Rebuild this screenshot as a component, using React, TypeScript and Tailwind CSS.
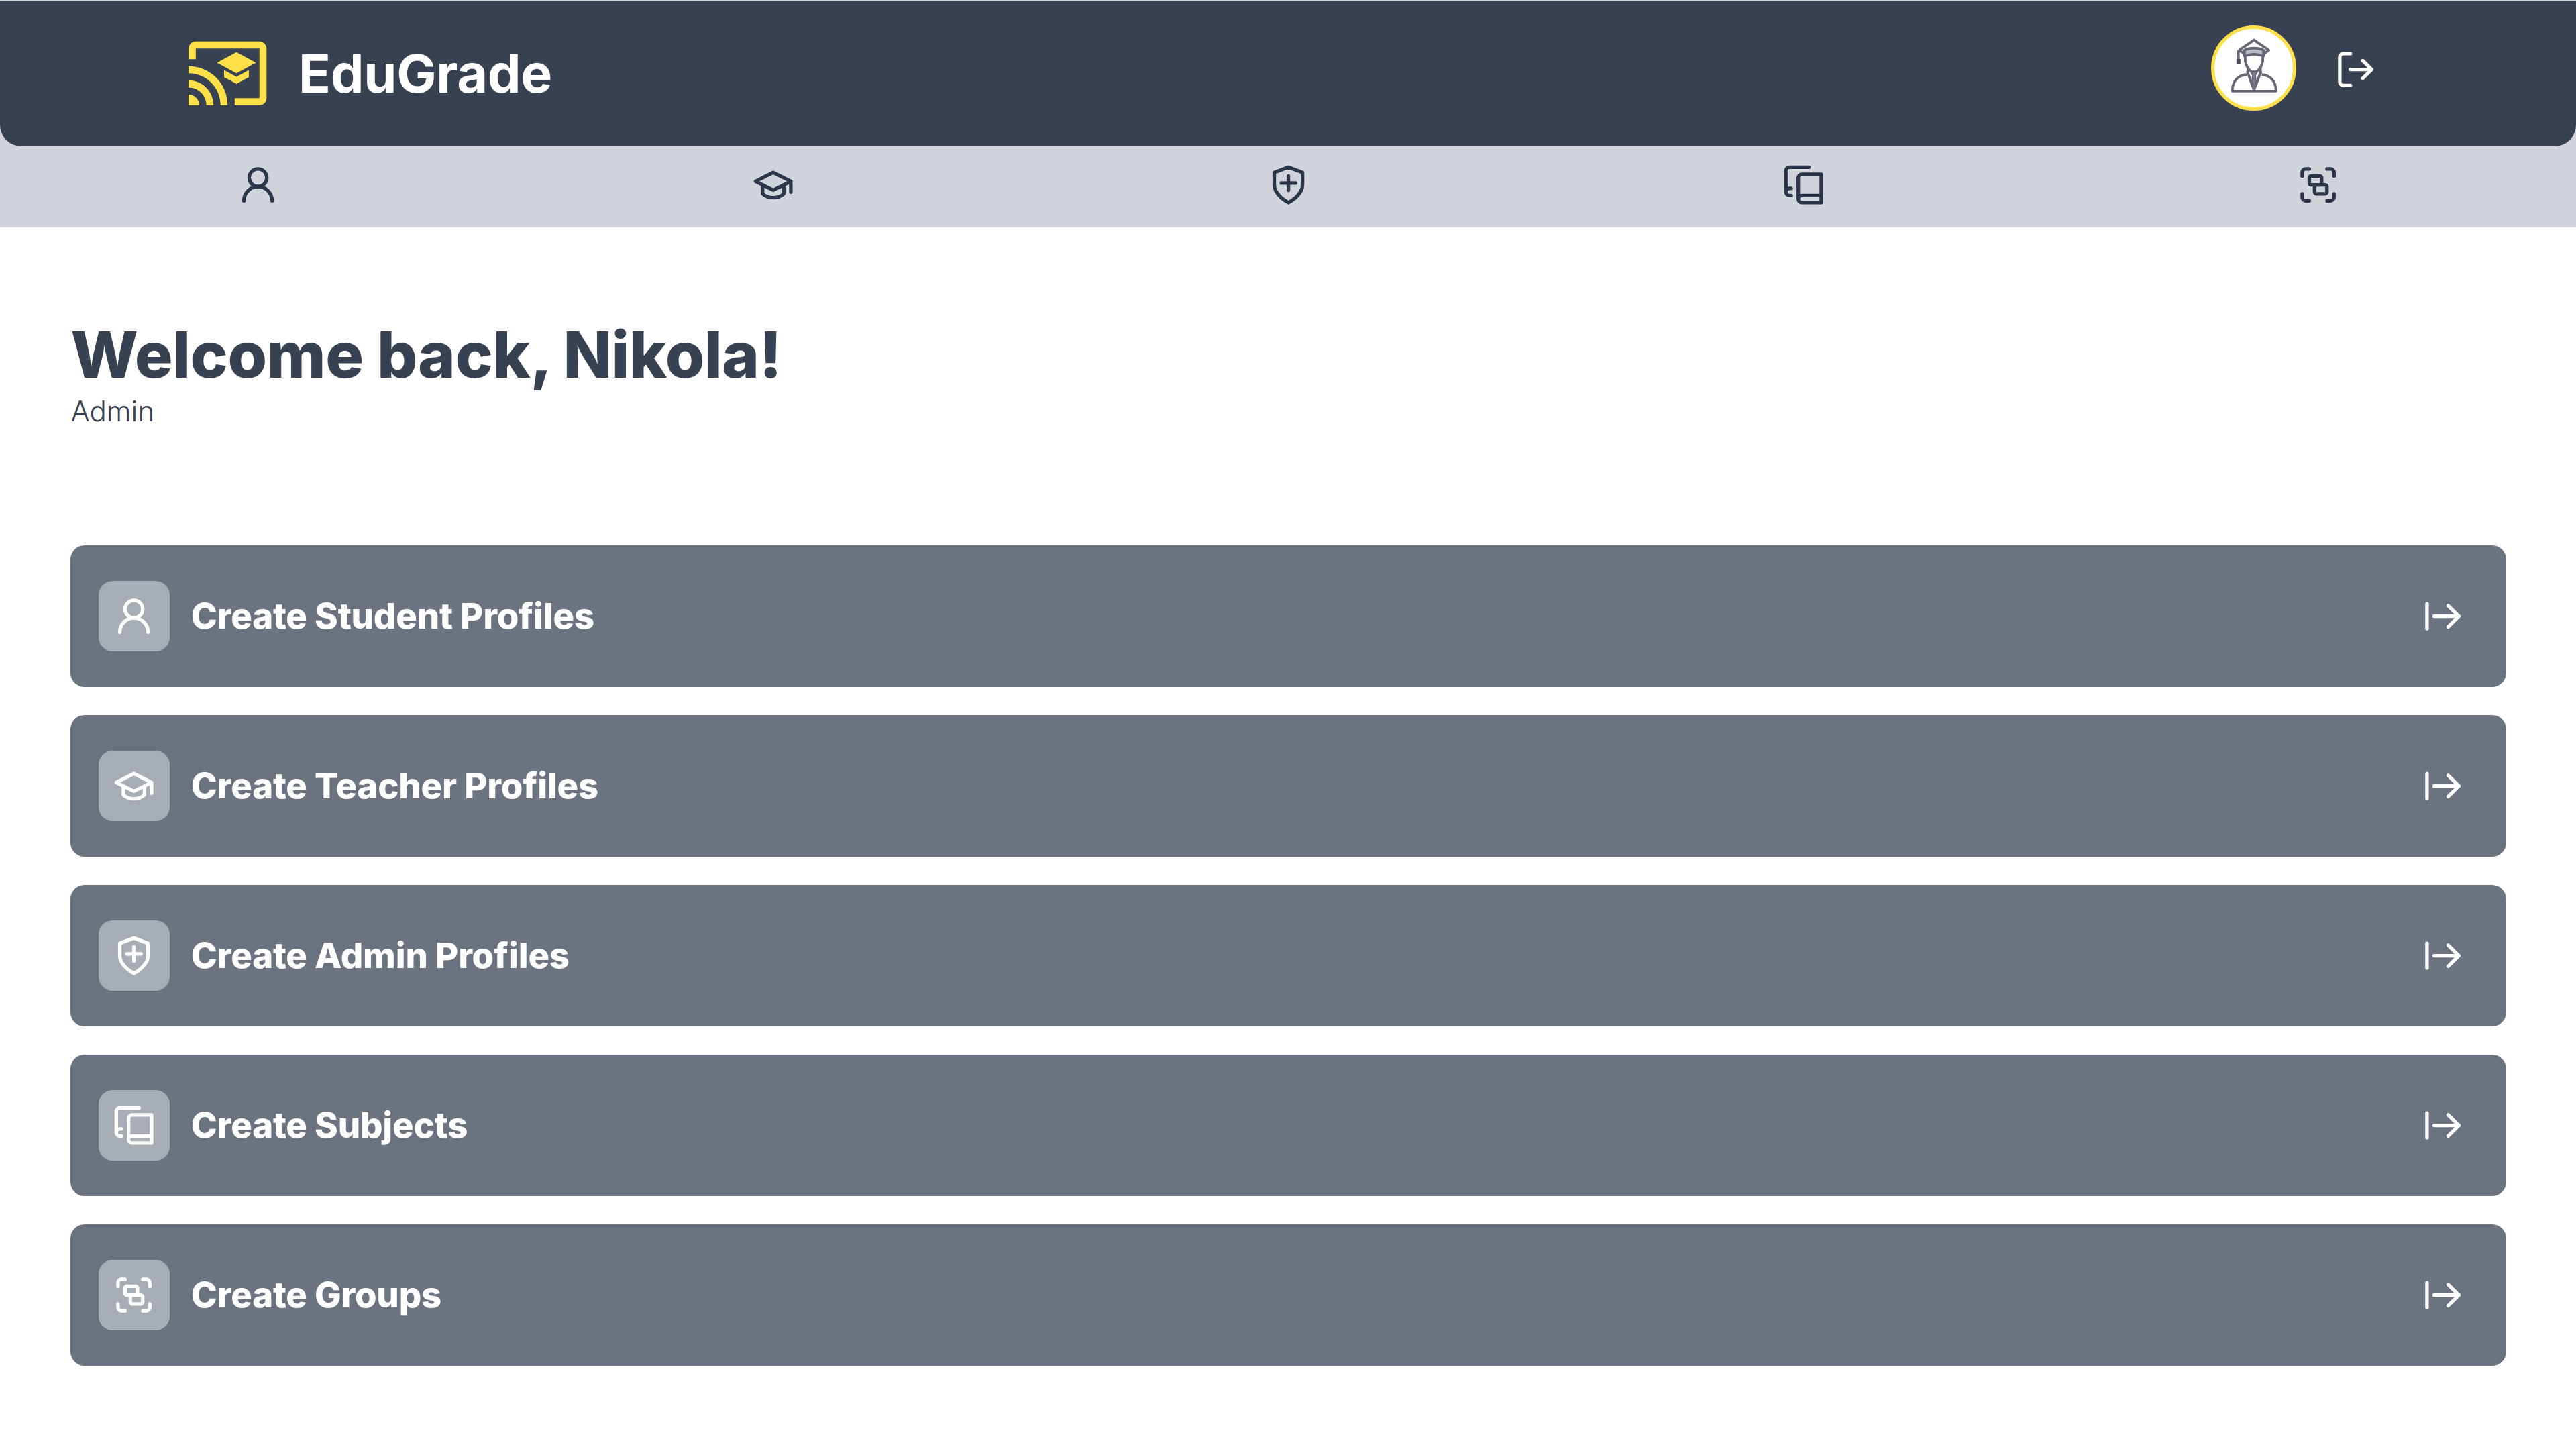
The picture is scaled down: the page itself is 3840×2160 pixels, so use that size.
import type { ReactNode } from "react";

type IconProps = { className?: string };

function Icon({ className, children }: IconProps & { children: ReactNode }) {
  return (
    <svg
      viewBox="0 0 24 24"
      fill="none"
      stroke="currentColor"
      strokeWidth={2}
      strokeLinecap="round"
      strokeLinejoin="round"
      className={`size-[63.2px] shrink-0 ${className ?? ""}`}
    >
      {children}
    </svg>
  );
}

const UserIcon = () => (
  <Icon>
    <circle cx="12" cy="8" r="5" />
    <path d="M20 21a8 8 0 0 0-16 0" />
  </Icon>
);

const CapIcon = () => (
  <Icon>
    <path d="M22 10v6M2 10l10-5 10 5-10 5z" />
    <path d="M6 12v5c3 3 9 3 12 0v-5" />
  </Icon>
);

const ShieldIcon = () => (
  <Icon>
    <path d="M12 22s8-4 8-10V5l-8-3-8 3v7c0 6 8 10 8 10" />
    <path d="M8 11h8" />
    <path d="M12 15V7" />
  </Icon>
);

const BooksIcon = () => (
  <Icon>
    <path d="M2 16V4a2 2 0 0 1 2-2h11" />
    <path d="M5 14H4a2 2 0 1 0 0 4h1" />
    <path d="M22 18H11a2 2 0 1 0 0 4h11V6H11a2 2 0 0 0-2 2v12" />
  </Icon>
);

const GroupIcon = () => (
  <Icon>
    <path d="M3 7V5c0-1.1.9-2 2-2h2" />
    <path d="M17 3h2c1.1 0 2 .9 2 2v2" />
    <path d="M21 17v2c0 1.1-.9 2-2 2h-2" />
    <path d="M7 21H5c-1.1 0-2-.9-2-2v-2" />
    <rect width="7" height="5" x="7" y="7" rx="1" />
    <rect width="7" height="5" x="10" y="12" rx="1" />
  </Icon>
);

const ArrowFromLineIcon = () => (
  <Icon className="text-white">
    <path d="M3 5v14" />
    <path d="M21 12H7" />
    <path d="m15 18 6-6-6-6" />
  </Icon>
);

const LogOutIcon = () => (
  <Icon className="mt-[5.5px] text-white">
    <path d="M9 21H5a2 2 0 0 1-2-2V5a2 2 0 0 1 2-2h4" />
    <path d="m16 17 5-5-5-5" />
    <path d="M21 12H9" />
  </Icon>
);

const Logo = () => (
  <svg viewBox="0 0 24 24" fill="currentColor" className="size-[126.6px] shrink-0 text-[#fde047]">
    <path d="M21 3H3c-1.1 0-2 .9-2 2v3h2V5h18v14h-7v2h7c1.1 0 2-.9 2-2V5c0-1.1-.9-2-2-2zM1 18v3h3c0-1.66-1.34-3-3-3zm0-4v2c2.76 0 5 2.24 5 5h2c0-3.87-3.13-7-7-7zm0-4v2c4.97 0 9 4.03 9 9h2c0-6.08-4.93-11-11-11zm10 1.09v2L14.5 15l3.5-1.91v-2L14.5 13 11 11.09zM14.5 6L9 9l5.5 3L20 9l-5.5-3z" />
  </svg>
);

/* Graduate wearing a mortarboard, shown as the profile picture */
const Avatar = () => (
  <div className="size-[127px] overflow-hidden rounded-full border-[5.5px] border-[#fde047] bg-white">
    <svg viewBox="5.5 5.5 116 116" fill="none" stroke="#666776" strokeWidth="3.8" strokeLinejoin="round" className="size-full">
      <path d="M42 37 64 22 86 37l-7 5" />
      <path d="M42 37l9 6" />
      <path d="M50 37c8-4 20-4 28 0v9c-8-4-20-4-28 0z" fill="#b9bbc5" />
      <path d="M41 37v15" />
      <path d="M38 50h6v8h-6z" fill="#4b4b5a" stroke="none" />
      <path d="M51 46v7c1 6 4 11 7 14 4 3 8 3 12 0 3-3 6-8 7-14v-7" />
      <path d="M55 63v10M73.500 63v10" />
      <path d="M53 73c-12 1-21 9-21 24.500h64.500c0-15.500-9-23.500-21-24.500" />
      <path d="M54 68l10 28 10.500-28" />
      <path d="M59 69h10l-3 5 1 12-3 8-3-8 1-12z" fill="#7b7b89" strokeWidth="2" />
    </svg>
  </div>
);

const sections = [
  { label: "Create Student Profiles", Glyph: UserIcon },
  { label: "Create Teacher Profiles", Glyph: CapIcon },
  { label: "Create Admin Profiles", Glyph: ShieldIcon },
  { label: "Create Subjects", Glyph: BooksIcon },
  { label: "Create Groups", Glyph: GroupIcon },
];

export default function App() {
  return (
    <div className="h-[2160px] w-[3840px] overflow-hidden bg-white font-['Inter',sans-serif]">
      <div className="bg-[#d1d5db] pt-[1.5px]">
        <header className="flex h-[216px] items-start justify-between rounded-b-[32px] bg-[#374151] pl-[276.4px] pr-[296.4px]">
          <div className="flex items-center gap-[42px] pt-[44.7px]">
            <Logo />
            <span className="text-[79px] leading-none font-bold tracking-[-0.003em] text-white">EduGrade</span>
          </div>
          <div className="flex items-center gap-[57.6px] pt-[36.2px]">
            <Avatar />
            <LogOutIcon />
          </div>
        </header>
        <nav className="grid h-[121.2px] grid-cols-5 pt-[26.200px] pl-[1px] text-[#2b364a]">
          {sections.map(({ label, Glyph }) => (
            <div key={label} className="flex justify-center">
              <Glyph />
            </div>
          ))}
        </nav>
      </div>

      <main className="flex flex-col pt-[137px] pr-[104px] pl-[105.4px]">
        <h1 className="text-[94.800px] leading-[105.300px] font-extrabold tracking-[-0.0045em] text-[#374151]">Welcome back, Nikola!</h1>
        <p className="text-[42.100px] leading-[63.200px] font-light text-[#374151]">Admin</p>
        <div className="mt-[169px] flex flex-col gap-[42.200px]">
          {sections.map(({ label, Glyph }) => (
            <div key={label} className="flex h-[210.800px] items-center rounded-[21px] bg-[#6b7280] pr-[63.300px] pl-[42px]">
              <div className="flex size-[105.400px] items-center justify-center rounded-[21px] bg-[#a7adb5] text-white">
                <Glyph />
              </div>
              <span className="ml-[32px] flex-1 text-[52.700px] leading-none font-extrabold tracking-[-0.004em] text-white">{label}</span>
              <ArrowFromLineIcon />
            </div>
          ))}
        </div>
      </main>
    </div>
  );
}
